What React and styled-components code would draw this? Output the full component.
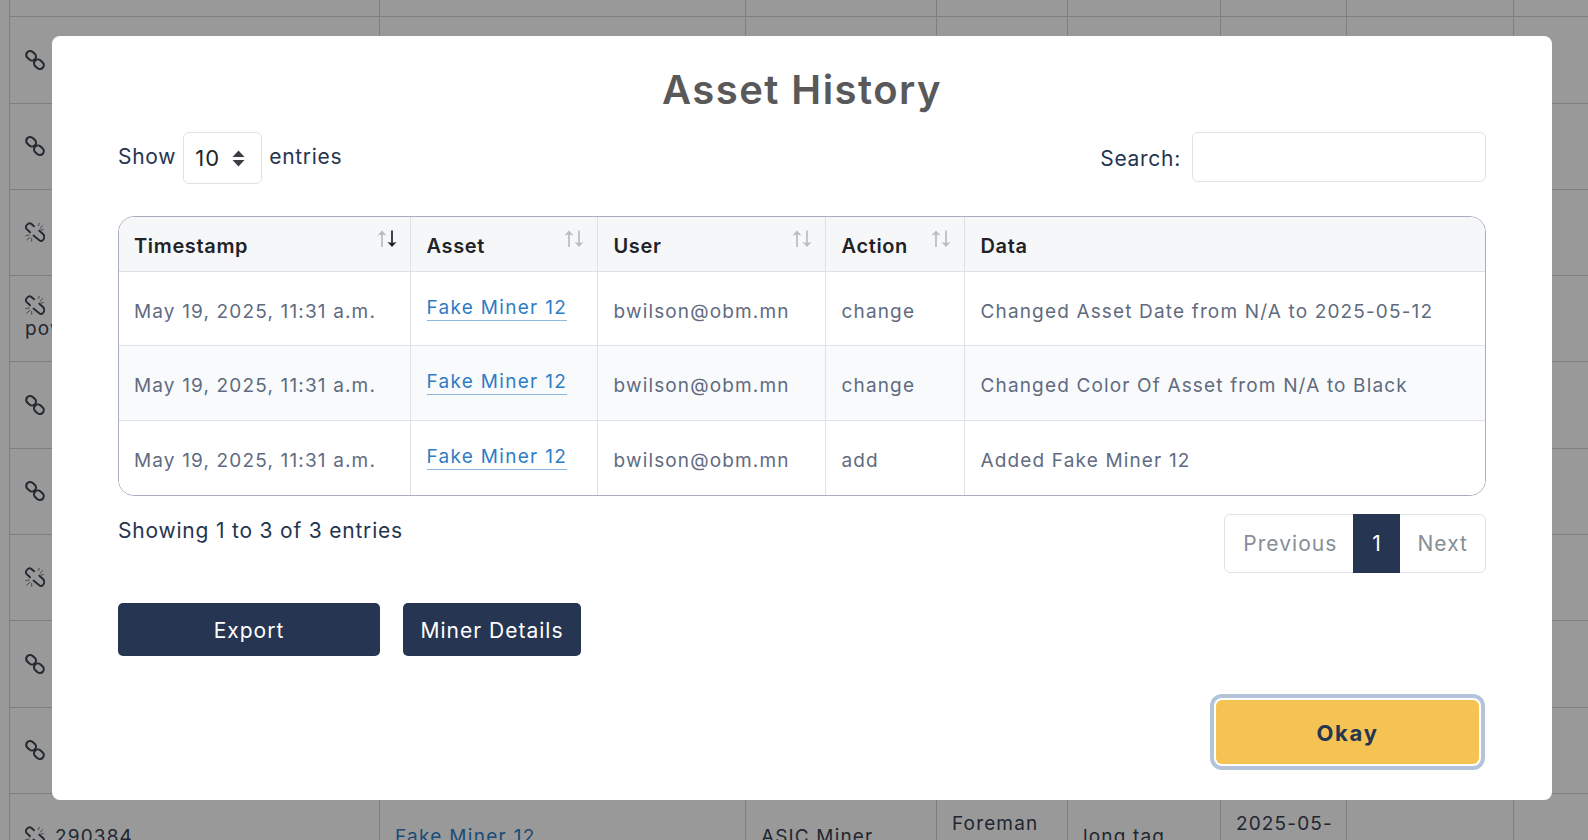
import React from "react";
import styled, { createGlobalStyle } from "styled-components";

const FONT = `"Inter", "Noto Sans", sans-serif`;

const Global = createGlobalStyle`
  html, body { margin: 0; padding: 0; height: 100%; background: #fff; overflow: hidden; }
  body { font-family: ${FONT}; }
  #root { height: 840px; }
`;

const Page = styled.div`
  position: relative;
  width: 1588px;
  height: 840px;
  overflow: hidden;
  background: #fff;
`;

const BackTable = styled.table`
  margin: -70px 0 0 9px;
  width: 1579px;
  border-collapse: collapse;
  table-layout: fixed;
  font: 400 19px/26px ${FONT};
  letter-spacing: 1.15px;
  color: #374151;
`;

const BackRow = styled.tr`
  height: 86.3px;
`;

const BackCell = styled.td`
  border: 1px solid #cdd6de;
  padding: 0 15px;
  vertical-align: middle;
  overflow: hidden;
`;

const BackLink = styled.span`
  color: #2f7fc8;
  letter-spacing: 1.3px;
`;

const NoWrap = styled.span`
  white-space: nowrap;
`;

const IconText = styled.div`
  display: flex;
  align-items: center;
  gap: 10px;
  white-space: nowrap;
`;

const Overlay = styled.div`
  position: absolute;
  inset: 0;
  background: rgba(0, 0, 0, 0.4);
  display: flex;
  justify-content: flex-start;
  align-items: flex-start;
  padding: 36px 0 0 52px;
  box-sizing: border-box;
`;

const Modal = styled.div`
  width: 1500px;
  height: 764px;
  box-sizing: border-box;
  background: #fff;
  border-radius: 8px;
  padding: 0 66px;
  display: flex;
  flex-direction: column;
  color: #25354f;
`;

const Title = styled.h2`
  margin: 27px 0 0;
  text-align: center;
  font: 600 40px/54px ${FONT};
  color: #595959;
  letter-spacing: 1.45px;
`;

const Controls = styled.div`
  margin-top: 15px;
  display: flex;
  justify-content: space-between;
  align-items: flex-start;
  height: 52px;
`;

const Label = styled.label`
  display: flex;
  align-items: center;
  gap: 7px;
  font: 400 21px/28px ${FONT};
  letter-spacing: 0.72px;
`;

const ShowText = styled.span`
  padding-bottom: 2px;
`;

const SearchText = styled.span`
  padding-top: 4px;
`;

const LengthSelect = styled.div`
  width: 79px;
  height: 52px;
  box-sizing: border-box;
  border: 1px solid #dee2e6;
  border-radius: 6px;
  padding: 0 15px 0 11px;
  display: flex;
  align-items: center;
  justify-content: space-between;
  font: 400 22px/28px ${FONT};
  letter-spacing: 1.2px;
  color: #212529;
`;

const SearchInput = styled.div`
  width: 294px;
  height: 50px;
  box-sizing: border-box;
  border: 1px solid #dee2e6;
  border-radius: 6px;
  margin-left: 4px;
`;

const TableWrap = styled.div`
  margin-top: 32px;
  height: 280px;
  box-sizing: border-box;
  border: 1px solid #a9aebd;
  border-radius: 16px;
  overflow: hidden;
`;

const DataTable = styled.table`
  width: 100%;
  height: 100%;
  border-collapse: collapse;
  table-layout: fixed;
`;

const Th = styled.th`
  position: relative;
  background: #f6f7f9;
  border-bottom: 1px solid #dee2e6;
  border-right: 1px solid #dee2e6;
  height: 54px;
  box-sizing: border-box;
  padding: 4px 15px 0;
  text-align: left;
  font: 600 20px/28px ${FONT};
  letter-spacing: 0.65px;
  color: #1f2328;
  &:not(:first-child) { padding-left: 16px; }
  &:last-child { border-right: 0; }
`;

const SortGlyph = styled.svg`
  position: absolute;
  top: 11px;
  right: 12px;
`;

const Tr = styled.tr`
  background: ${(p) => (p.$alt ? "#f9fafc" : "#fff")};
  height: 74px;
`;

const Td = styled.td`
  border-bottom: 1px solid #dee2e6;
  border-right: 1px solid #dee2e6;
  padding: 7px 15px 0;
  font: 400 19px/28px ${FONT};
  letter-spacing: 1.15px;
  color: #5f6b80;
  white-space: nowrap;
  &:not(:first-child) { padding-left: 16px; }
  tr:last-child > & { border-bottom: 0; }
  &:last-child { border-right: 0; }
`;

const AssetLink = styled.a`
  position: relative;
  top: -4px;
  color: #2f7dc3;
  border-bottom: 1px solid #8cb8e0;
  padding-bottom: 1px;
  letter-spacing: 1.3px;
`;

const Footer = styled.div`
  display: flex;
  justify-content: space-between;
  align-items: flex-start;
  margin-top: 18px;
`;

const Info = styled.div`
  font: 400 21px/34px ${FONT};
  letter-spacing: 0.8px;
`;

const Pager = styled.div`
  display: flex;
  height: 59px;
  box-sizing: border-box;
  border: 1px solid #dee2e6;
  border-radius: 6px;
  font: 400 21px/57px ${FONT};
  letter-spacing: 1.05px;
  color: #868e96;
`;

const PageItem = styled.span`
  padding: 0 ${(p) => p.$right}px 0 ${(p) => p.$left}px;
`;

const ActivePage = styled.span`
  width: 47px;
  margin: -1px 0;
  text-align: center;
  line-height: 59px;
  background: #263551;
  color: #fff;
`;

const Actions = styled.div`
  display: flex;
  gap: 23px;
  margin-top: 30px;
`;

const DarkButton = styled.button`
  width: ${(p) => p.$w}px;
  height: 53px;
  border: 0;
  border-radius: 5px;
  background: #263551;
  color: #fff;
  font: 400 21px/28px ${FONT};
  letter-spacing: 1px;
  padding: 2px 0 0;
`;

const Confirm = styled.div`
  display: flex;
  justify-content: flex-end;
  margin: 44px 7px 0 0;
`;

const OkayButton = styled.button`
  width: 263px;
  height: 64px;
  border: 0;
  border-radius: 6px;
  background: #f4c353;
  color: #263551;
  font: 700 22px/28px ${FONT};
  letter-spacing: 1.7px;
  box-shadow: 0 0 0 2px #fff, 0 0 0 6px #b3c3d9;
  padding: 2px 0 0;
`;

const LinkIcon = () => (
  <svg width="20" height="20" viewBox="0 0 20 20" fill="none" stroke="#3d4653" strokeWidth="2.1">
    <rect x="0.9" y="1.9" width="10.4" height="7.8" rx="3.9" transform="rotate(42 6.1 5.8)" />
    <rect x="8.7" y="10.3" width="10.4" height="7.8" rx="3.9" transform="rotate(42 13.9 14.2)" />
  </svg>
);

const BrokenIcon = () => (
  <svg width="20" height="21" viewBox="0 0 20 21" fill="none" stroke="#3d4653" strokeWidth="1.9" strokeLinecap="round">
    <path d="M9 4.3 L6.5 2 C3.5 -0.2 -0.5 4 1.5 7 L5 10.3" />
    <path d="M14.3 8.7 L18 12 C21 15 18 20.5 14.5 18.5 L8.5 13.5" />
    <g stroke="#666d78" strokeWidth="0.9">
      <path d="M13.3 3.7 L14.3 1.3 M15 6.3 L17.7 3.7 M15.8 8 L18.4 7.7" />
      <path d="M0.7 13.7 L4.3 13 M1.7 18 L5 15.3 M6.7 19.3 L6.7 16.3" />
    </g>
  </svg>
);

const Sort = ({ down }) => {
  const dark = down ? "#1f2328" : "#b9bcc1";
  return (
    <SortGlyph width="22" height="22" viewBox="0 0 22 22" fill="none" strokeWidth="1.7">
      <path d="M6 19 V6" stroke="#b9bcc1" />
      <path d="M1.5 7.5 L6 2.5 L10.5 7.5 L6 6.5 Z" fill="#b9bcc1" />
      <path d="M16 2.5 V15" stroke={dark} />
      <path d="M11.5 14 L16 19 L20.5 14 L16 15 Z" fill={dark} />
    </SortGlyph>
  );
};

const SelectArrows = () => (
  <svg width="15" height="17" viewBox="0 0 15 17" fill="#3a3f47">
    <path d="M7.5 0.5 L13.5 7 H1.5 Z" />
    <path d="M7.5 16.5 L13.5 10 H1.5 Z" />
  </svg>
);

const backRows = [
  { icon: LinkIcon, t: "" },
  { icon: LinkIcon, t: "1" },
  { icon: LinkIcon, t: "1" },
  { icon: BrokenIcon, t: "" },
  { icon: BrokenIcon, t: "", second: "power" },
  { icon: LinkIcon, t: "i" },
  { icon: LinkIcon, t: "1" },
  { icon: BrokenIcon, t: "" },
  { icon: LinkIcon, t: "1" },
  { icon: LinkIcon, t: "e" },
  { icon: BrokenIcon, t: "290384", last: true },
];

const colWidths = [370, 366, 191, 131, 153, 126, 167, 75];

const history = [
  ["change", "Changed Asset Date from N/A to 2025-05-12"],
  ["change", "Changed Color Of Asset from N/A to Black"],
  ["add", "Added Fake Miner 12"],
];

export default function App() {
  return (
    <Page>
      <Global />
      <BackTable>
        <colgroup>
          {colWidths.map((w, i) => (
            <col key={i} style={{ width: w }} />
          ))}
        </colgroup>
        <tbody>
          {backRows.map((r, i) => {
            const Icon = r.icon;
            return (
              <BackRow key={i}>
                <BackCell>
                  <IconText>
                    <Icon />
                    {r.t}
                  </IconText>
                  {r.second}
                </BackCell>
                <BackCell>{r.last && <BackLink>Fake Miner 12</BackLink>}</BackCell>
                <BackCell>{r.last && "ASIC Miner"}</BackCell>
                <BackCell>{r.last && <>Foreman<br />S19</>}</BackCell>
                <BackCell>{r.last && "long tag"}</BackCell>
                <BackCell>{r.last && <><NoWrap>2025-05-</NoWrap><br />12</>}</BackCell>
                <BackCell />
                <BackCell />
              </BackRow>
            );
          })}
        </tbody>
      </BackTable>
      <Overlay>
        <Modal>
          <Title>Asset History</Title>
          <Controls>
            <Label>
              <ShowText>Show</ShowText>
              <LengthSelect>
                10
                <SelectArrows />
              </LengthSelect>
              <ShowText>entries</ShowText>
            </Label>
            <Label>
              <SearchText>Search:</SearchText>
              <SearchInput />
            </Label>
          </Controls>
          <TableWrap>
            <DataTable>
              <colgroup>
                <col style={{ width: 291 }} />
                <col style={{ width: 187 }} />
                <col style={{ width: 228 }} />
                <col style={{ width: 139 }} />
                <col />
              </colgroup>
              <thead>
                <tr>
                  <Th>Timestamp<Sort down /></Th>
                  <Th>Asset<Sort /></Th>
                  <Th>User<Sort /></Th>
                  <Th>Action<Sort /></Th>
                  <Th>Data</Th>
                </tr>
              </thead>
              <tbody>
                {history.map(([action, data], i) => (
                  <Tr key={i} $alt={i === 1}>
                    <Td>May 19, 2025, 11:31 a.m.</Td>
                    <Td><AssetLink>Fake Miner 12</AssetLink></Td>
                    <Td>bwilson@obm.mn</Td>
                    <Td>{action}</Td>
                    <Td>{data}</Td>
                  </Tr>
                ))}
              </tbody>
            </DataTable>
          </TableWrap>
          <Footer>
            <Info>Showing 1 to 3 of 3 entries</Info>
            <Pager>
              <PageItem $left={18} $right={16}>Previous</PageItem>
              <ActivePage>1</ActivePage>
              <PageItem $left={17} $right={17}>Next</PageItem>
            </Pager>
          </Footer>
          <Actions>
            <DarkButton $w={262}>Export</DarkButton>
            <DarkButton $w={178}>Miner Details</DarkButton>
          </Actions>
          <Confirm>
            <OkayButton>Okay</OkayButton>
          </Confirm>
        </Modal>
      </Overlay>
    </Page>
  );
}
